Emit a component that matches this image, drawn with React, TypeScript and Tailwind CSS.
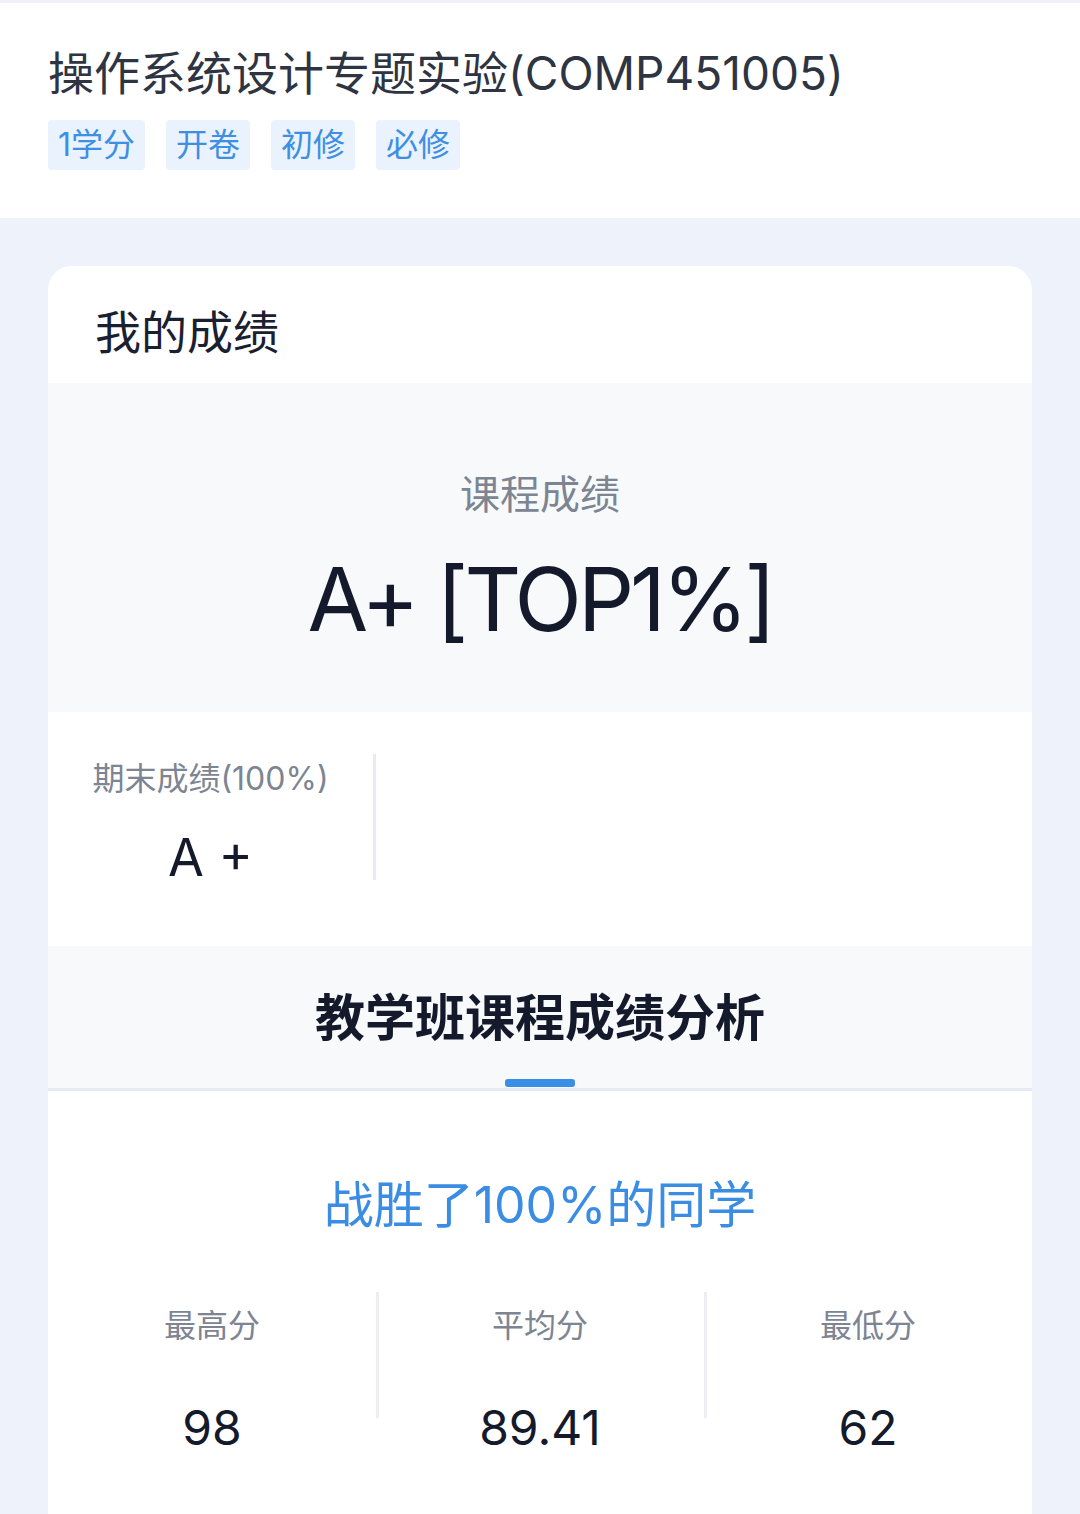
const font = { fontFamily: 'Inter, "Noto Sans CJK SC", sans-serif' };

const tags = ["1学分", "开卷", "初修", "必修"];

const stats = [
  { label: "最高分", value: "98" },
  { label: "平均分", value: "89.41" },
  { label: "最低分", value: "62" },
];

export default function App() {
  return (
    <div className="min-h-[1514px] bg-[#eef2fa]" style={font}>
      <div className="h-[3px] bg-[#eef1f8]" />
      {/* course header */}
      <div className="bg-white px-[48px] pt-[42px] pb-[48px]">
        <h1 className="text-[46px] leading-[56px] text-[#2e3442] font-normal">
          操作系统设计专题实验(COMP451005)
        </h1>
        <div className="mt-[19px] flex gap-[21px]">
          {tags.map((t) => (
            <span
              key={t}
              className="h-[50px] px-[10px] rounded-[4px] bg-[#e9f2fd] text-[#3d8fe4] text-[32px] leading-[50px]"
            >
              {t}
            </span>
          ))}
        </div>
      </div>

      <div className="mx-[48px] mt-[48px] rounded-t-[24px] bg-white overflow-hidden">
        <div className="px-[47px] pt-[38px] pb-[23px]">
          <h2 className="text-[46px] leading-[56px] text-[#1b2030] font-normal">我的成绩</h2>
        </div>

        {/* overall grade */}
        <div className="h-[329px] bg-[#f7f9fb] flex flex-col items-center pt-[88px]">
          <div className="text-[40px] leading-[48px] text-[#7d8492]">课程成绩</div>
          <div className="mt-[30px] text-[88px] leading-[100px] tracking-[-4px] text-[#141a2b]">A+ [TOP1%]</div>
        </div>

        {/* final exam */}
        <div className="h-[234px] pt-[42px]">
          <div className="w-[328px] h-[126px] border-r-[3px] border-[#e9ebf0] flex flex-col items-center">
            <div className="mt-[3px] text-[32px] leading-[44px] text-[#7d8492]">期末成绩(100%)</div>
            <div className="mt-[27px] text-[52px] leading-[60px] text-[#141a2b]">A +</div>
          </div>
        </div>

        {/* analysis tab */}
        <div className="h-[145px] bg-[#f7f9fb] border-b-[3px] border-[#e6eaf2] flex flex-col items-center pt-[40px]">
          <div className="text-[50px] leading-[64px] font-bold text-[#141a2b]">教学班课程成绩分析</div>
          <div className="mt-[29px] w-[70px] h-[8px] rounded-[3px] bg-[#3a8ee6]" />
        </div>

        <div className="flex flex-col items-center pt-[82px] pb-[60px]">
          <div className="text-[50px] leading-[64px] text-[#3a8de3]">战胜了100%的同学</div>
          <div className="mt-[55px] w-full grid grid-cols-3">
            {stats.map((s, i) => (
              <div key={s.label} className="relative flex flex-col items-center">
                {i > 0 && (
                  <div className="absolute left-0 top-[0px] h-[126px] w-[3px] bg-[#eceef3]" />
                )}
                <div className="mt-[12px] text-[32px] leading-[44px] text-[#7d8492]">{s.label}</div>
                <div className="mt-[50px] text-[48px] leading-[60px] text-[#141a2b]">{s.value}</div>
              </div>
            ))}
          </div>
        </div>
      </div>
    </div>
  );
}
